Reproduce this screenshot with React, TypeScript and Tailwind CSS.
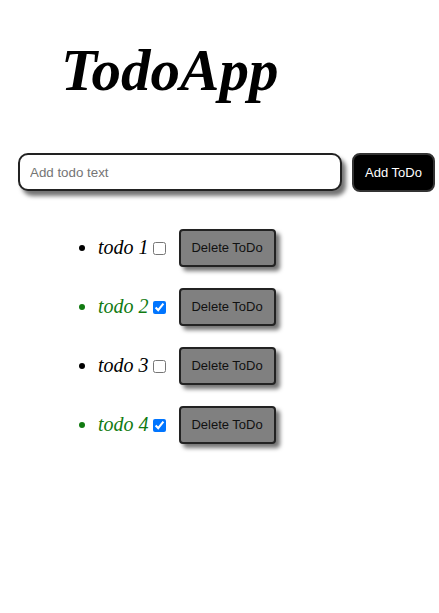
import { useState } from "react";

interface Todo {
  id: number;
  text: string;
  done: boolean;
}

const INITIAL: Todo[] = [
  { id: 1, text: "todo 1", done: false },
  { id: 2, text: "todo 2", done: true },
  { id: 3, text: "todo 3", done: false },
  { id: 4, text: "todo 4", done: true },
];

export default function App() {
  const [todos, setTodos] = useState<Todo[]>(INITIAL);
  const [text, setText] = useState("");

  const addTodo = () => {
    if (!text.trim()) return;
    setTodos((t) => [...t, { id: Date.now(), text, done: false }]);
    setText("");
  };

  return (
    <div className="min-h-[613px] bg-white font-['Liberation_Sans',Arial,sans-serif]">
      <h1 className="pl-[61px] pt-[38px] font-['Liberation_Serif','Times_New_Roman',serif] text-[59px] leading-[64px] font-bold italic text-black">
        TodoApp
      </h1>

      {/* Input row */}
      <div className="mt-[51px] flex items-start gap-[10px] pl-[18px]">
        <input
          value={text}
          onChange={(e) => setText(e.target.value)}
          placeholder="Add todo text"
          className="h-[38px] w-[324px] rounded-[10px] border-2 border-[#222] bg-white px-[10px] text-[13.33px] text-black shadow-[4px_5px_4px_rgba(0,0,0,0.55)] outline-none placeholder:text-[#757575]"
        />
        <button
          onClick={addTodo}
          className="h-[39px] w-[83px] rounded-[8px] border-2 border-[#333] bg-black text-[13px] text-white"
        >
          Add ToDo
        </button>
      </div>

      {/* Todo list */}
      <ul className="mt-[37px] flex flex-col gap-[21px] pl-[79px]">
        {todos.map((t) => (
          <li
            key={t.id}
            className={t.done ? "flex items-center text-[#117a11]" : "flex items-center text-black"}
          >
            <span className={t.done ? "h-[6px] w-[6px] rounded-full bg-[#117a11]" : "h-[6px] w-[6px] rounded-full bg-black"} />
            <span className="ml-[13px] pb-[3px] font-['Liberation_Serif','Times_New_Roman',serif] text-[20px] italic leading-[24px]">
              {t.text}
            </span>
            <input
              type="checkbox"
              checked={t.done}
              onChange={() =>
                setTodos((all) =>
                  all.map((x) => (x.id === t.id ? { ...x, done: !x.done } : x)),
                )
              }
              className="ml-[4px] h-[13px] w-[13px]"
            />
            <button
              onClick={() => setTodos((all) => all.filter((x) => x.id !== t.id))}
              className="ml-[13px] h-[38px] w-[97px] rounded-[4px] border-2 border-[#222] bg-[#808080] text-[13px] text-[#111] shadow-[4px_4px_4px_rgba(0,0,0,0.55)]"
            >
              Delete ToDo
            </button>
          </li>
        ))}
      </ul>
    </div>
  );
}
